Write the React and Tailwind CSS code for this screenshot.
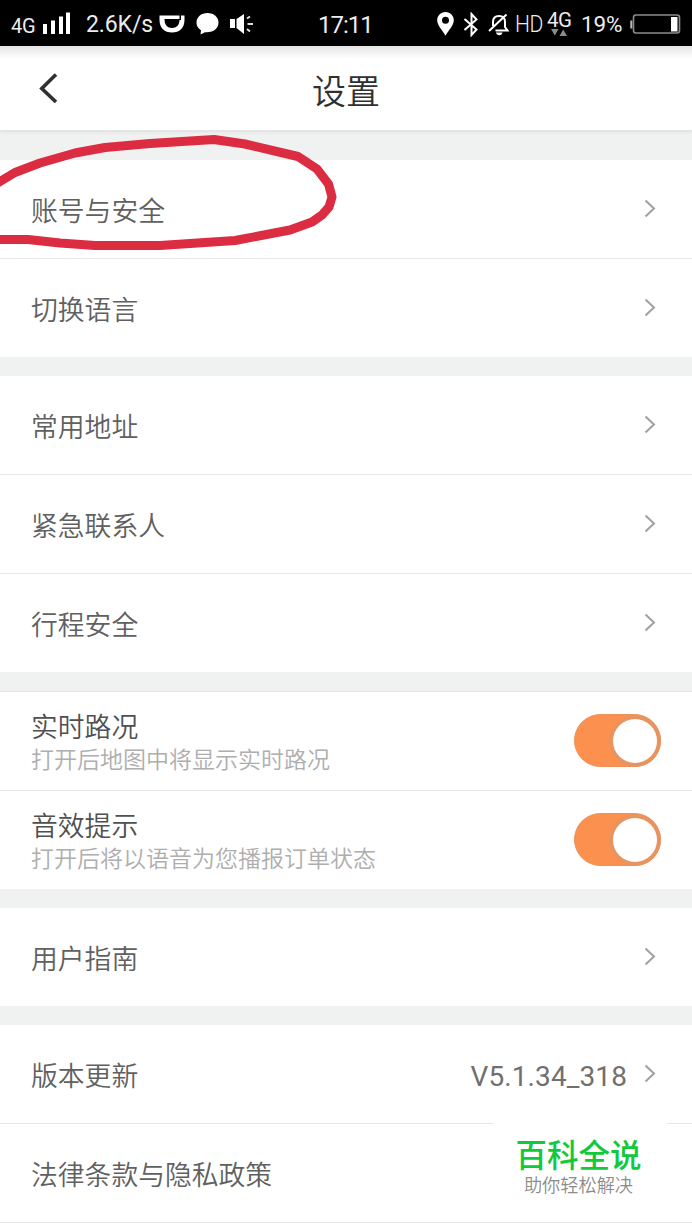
import clsx from "clsx";

// ─── Data ───────────────────────────────────────────────────────────────────
const groups = [
  [{ label: "账号与安全" }, { label: "切换语言" }],
  [{ label: "常用地址" }, { label: "紧急联系人" }, { label: "行程安全" }],
  [
    { label: "实时路况", hint: "打开后地图中将显示实时路况" },
    { label: "音效提示", hint: "打开后将以语音为您播报订单状态" },
  ],
  [{ label: "用户指南" }],
  [{ label: "版本更新", value: "V5.1.34_318" }, { label: "法律条款与隐私政策" }],
];

// ─── Status bar ─────────────────────────────────────────────────────────────
const StatusBar = () => (
  <div className="flex h-[46px] items-center bg-black pt-0.5 text-[#ececec]">
    <span className="ml-[11px] w-[26px] pt-1 text-[20px] leading-none tracking-[-0.3px]">4G</span>
    <svg className="ml-[5px] h-6 w-7" viewBox="0 0 28 24" fill="#fff">
      <path d="M1 12h4v10H1zM9 8.500h4V22H9zM17 4.500h4V22h-4zM24 .5h4V22h-4z" />
    </svg>
    <span className="ml-[16px] w-[67px] text-[23px] leading-none tracking-[-0.1px] whitespace-nowrap">
      2.6K/s
    </span>
    <svg className="ml-[6px] h-[19px] w-[26px]" viewBox="0 0 26 19">
      <path
        fillRule="evenodd"
        fill="#fff"
        d="M.5.5H20.500V4H5.500C5.500 10 8.500 13 13 13S20.500 10 20.500 5H22V.5H25.500V5C25.500 13 20.500 17.500 13 17.500S.5 13 .5 5z"
      />
    </svg>
    <svg className="ml-[11px] h-[22px] w-[23px]" viewBox="0 0 23 22" fill="#fff">
      <path d="M11.500 0C5 0 .5 4.200.5 9.500c0 3.400 1.700 6 4.500 7.700L4.500 21.500l4.500-2.300c8 .8 13.500-3.500 13.500-9.700C22.500 4.200 18 0 11.500 0z" />
    </svg>
    <svg className="ml-[10px] h-[22px] w-[25px]" viewBox="0 0 25 22">
      <path d="M1 6h5v9H1zM7.500 6L15 1v20L7.500 15z" fill="#fff" />
      <path d="M18 5.500l3-2M18.500 11H24M18 16l3 2.500" stroke="#ddd" strokeWidth="2" />
    </svg>

    <span className="ml-[64px] w-[56px] pt-0.5 text-[24px] leading-none tracking-[-1px] whitespace-nowrap">
      17:11
    </span>

    <svg className="ml-[63px] h-6 w-[17px]" viewBox="0 0 17 24">
      <path
        fillRule="evenodd"
        fill="#fff"
        d="M8.500 0C3.600 0 .2 3.700.2 8.300c0 5.200 5.300 10.200 8.300 15.400 3-5.200 8.300-10.200 8.300-15.400C16.800 3.700 13.400 0 8.500 0zm0 4.800a3.500 3.500 0 110 7 3.500 3.500 0 010-7z"
      />
    </svg>
    <svg className="ml-[9px] h-[25px] w-4" viewBox="0 0 16 25" fill="none" stroke="#fff" strokeWidth="2">
      <path d="M1.500 7l12 10.500L8.500 23V2l5 5.500L1.500 18" />
    </svg>
    <svg className="ml-[9px] h-[23px] w-[22px]" viewBox="0 0 22 23" fill="none" stroke="#fff" strokeWidth="2">
      <path d="M5 13V9c0-4 2.500-6 6-6s6 2 6 6v5l2.500 3.500H7.500M1 18L18.500 1.500" />
      <path d="M8 19.500h6.500c-.5 3.500-6 3.500-6.500 0z" fill="#fff" stroke="none" />
    </svg>
    <span className="ml-[5px] w-[29px] origin-left scale-x-88 text-[24px] leading-none font-light tracking-[-0.5px]">
      HD
    </span>
    <span className="ml-[3px] flex w-[26px] flex-col pb-0.5">
      <span className="text-[20.500px] leading-[18px] tracking-[-0.4px]">4G</span>
      <svg className="ml-1 h-[7px] w-4" viewBox="0 0 16 7" fill="#8b8b8b">
        <path d="M0 0h7.500L3.800 6.500zM8.500 7H16L12.200.5z" />
      </svg>
    </span>
    <span className="ml-[8px] w-[43px] text-[22.500px] leading-none tracking-[-0.2px]">19%</span>
    <svg className="ml-[6px] h-5 w-[51px]" viewBox="0 0 51 20">
      <rect x="3.500" y="1" width="46" height="18" rx="2.500" fill="none" stroke="#8c8c8c" strokeWidth="1.600" />
      <path d="M.3 6.500h2v8h-2z" fill="#bbb" />
      <path d="M41 3h6.500v14.500H41z" fill="#fff" />
    </svg>
  </div>
);

// ─── Header ─────────────────────────────────────────────────────────────────
const Header = () => (
  <header className="relative z-10 flex h-[85px] items-center border-b border-[#e2e5e4] bg-linear-to-b from-[#e4e4e4] via-white via-15% to-white shadow-[0_1px_3px_rgba(0,0,0,0.08)]">
    <button className="ml-[39px] w-[19px]" aria-label="返回">
      <svg className="h-[30px] w-[19px]" viewBox="0 0 19 30" fill="none" stroke="#303030" strokeWidth="3.600">
        <path d="M17 1.500L2.800 15.500 17 29" />
      </svg>
    </button>
    <h1 className="flex-1 pt-[7px] pr-[58px] text-center text-[34px] leading-none font-[350] text-[#303030]">设置</h1>
  </header>
);

// ─── Rows ───────────────────────────────────────────────────────────────────
const Chevron = () => (
  <svg className="mb-px h-[19px] w-3" viewBox="0 0 12 19" fill="none" stroke="#a0a0a0" strokeWidth="2">
    <path d="M1.500 1.500l8.500 8-8.500 8" />
  </svg>
);

const Toggle = () => (
  <button
    role="switch"
    aria-checked="true"
    className="mb-px flex h-[53px] w-[87px] items-center justify-end rounded-full border border-[#eb9159] bg-[#fc914f] pr-[3px]"
  >
    <span className="size-[44px] rounded-full bg-white shadow-[0_0_0_4px_#e89460]" />
  </button>
);

const Row = ({ item, divided }) => (
  <li
    className={clsx(
      "flex items-center justify-between bg-white pl-[31px]",
      divided ? "h-[99px] border-t border-[#e6e7e7]" : "h-[98px]",
      item.hint ? "pr-[31px]" : "pr-[36px]",
    )}
  >
    <div className={clsx("flex flex-col font-[350]", item.hint ? "pt-[6px]" : "pt-[5px]")}>
      <span
        className={clsx(
          "text-[26.8px]",
          item.hint ? "leading-[34px] text-[#505050]" : "leading-[38px] text-[#606060]",
        )}
      >
        {item.label}
      </span>
      {item.hint && (
        <span className="text-[23px] leading-[32px] text-[#aeaeae]">{item.hint}</span>
      )}
    </div>
    {item.hint ? (
      <Toggle />
    ) : (
      <div className="flex items-center gap-[17px]">
        {item.value && (
          <span className="pt-1.5 text-[28px] leading-none tracking-[0.1px] text-[#707070]">{item.value}</span>
        )}
        <Chevron />
      </div>
    )}
  </li>
);

// Hand-drawn highlight around the first entry
const Highlight = () => (
  <svg
    className="pointer-events-none absolute top-0 left-0 z-20 h-[260px] w-[350px]"
    viewBox="0 0 350 260"
    fill="none"
    stroke="#dc2c41"
    strokeWidth="9"
    strokeLinejoin="round"
  >
    <path d="M-4 184L15 172.500 40 163 75 153 105 147.500 150 143.500 214 139.500 245 144 298 156.500 317 169 328.500 184 332 197 329 207 322 215 312 222 290 230 235 240.500 160 245.500 95 245.500 60 243 28 239.500H-4" />
  </svg>
);

const Watermark = () => (
  <div className="absolute top-[1120px] left-[494px] z-20 flex h-[86px] w-[173px] flex-col items-center bg-white pt-[19px] pr-1">
    <span className="text-[31.500px] leading-[35px] font-medium text-[#12c93c]">百科全说</span>
    <span className="text-[18.200px] leading-[24px] font-[350] text-[#8c8c8c]">助你轻松解决</span>
  </div>
);

const App = () => (
  <div className="relative h-[1230px] w-[692px] overflow-hidden bg-[#eff2f1] font-[Roboto,'Noto_Sans_CJK_SC',sans-serif]">
    <StatusBar />
    <Header />
    <main className="flex flex-col gap-[19px] pt-[29px]">
      {groups.map((items, index) => (
        <ul
          key={items[0].label}
          className={clsx(
            index === 2 && "border-t border-[#e3e5e4]",
            index === groups.length - 1 && "bg-white pb-5",
          )}
        >
          {items.map((item, i) => (
            <Row key={item.label} item={item} divided={i > 0} />
          ))}
          {index === groups.length - 1 && <li className="h-px bg-[#e6e7e7]" />}
        </ul>
      ))}
    </main>
    <Highlight />
    <Watermark />
  </div>
);

export default App;
